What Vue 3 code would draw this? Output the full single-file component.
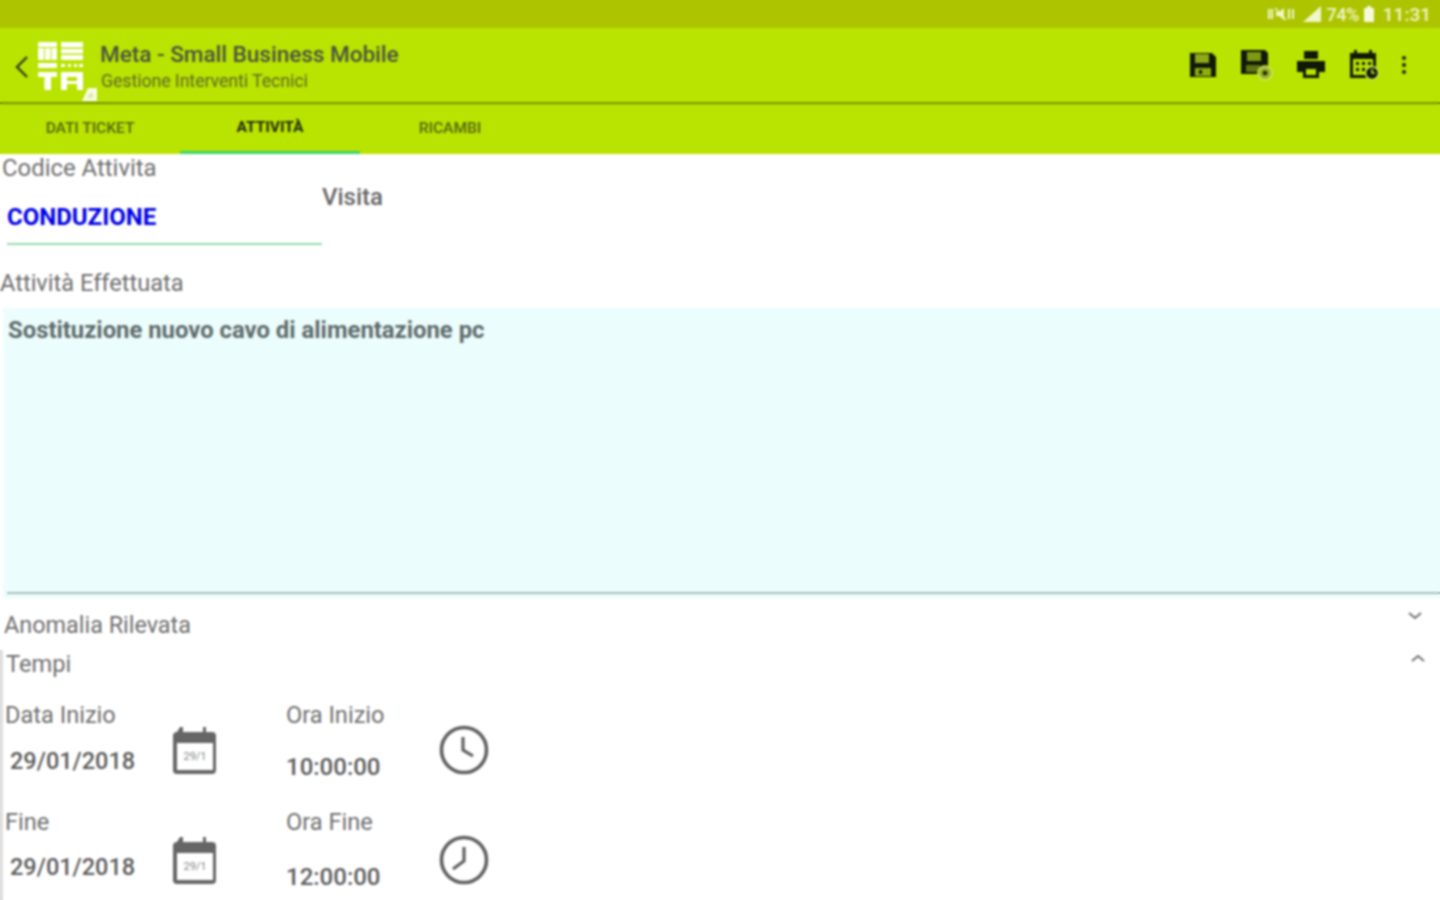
<script setup>
const tabs = [
  { label: 'DATI TICKET', active: false },
  { label: 'ATTIVITÀ', active: true },
  { label: 'RICAMBI', active: false }
]
const timeRows = [
  { dateLabel: 'Data Inizio', date: '29/01/2018', timeLabel: 'Ora Inizio', time: '10:00:00', hand: 'M24 12V25L34 31' },
  { dateLabel: 'Fine', date: '29/01/2018', timeLabel: 'Ora Fine', time: '12:00:00', hand: 'M25 12V26L14 34' }
]
</script>

<template>
  <div class="screen">
    <div class="status">
      <svg class="st-mute" width="28" height="16" viewBox="0 0 28 16">
        <path d="M1 3v10M4 3v10" stroke="#f1f6c8" stroke-width="2" />
        <path d="M8 6h3l5-4v12l-5-4H8z" fill="#f1f6c8" />
        <path d="M7 2l11 12" stroke="#f1f6c8" stroke-width="1.500" />
        <path d="M21 3v10M25 3v10" stroke="#f1f6c8" stroke-width="2" />
      </svg>
      <svg class="st-signal" width="20" height="16" viewBox="0 0 20 16"><path d="M1 16L19 0V16Z" fill="#f1f6c8" /></svg>
      <span class="st-pct">74%</span>
      <svg class="st-bat" width="12" height="16" viewBox="0 0 12 16"><path d="M4 0h4v2h3v14H1V2h3z" fill="#f6f9dc" /></svg>
      <span class="st-time">11:31</span>
    </div>

    <header class="toolbar">
      <svg class="back" width="16" height="26" viewBox="0 0 16 26"><path d="M13 3L3 13l10 10" fill="none" stroke="#333d22" stroke-width="2.400" /></svg>
      <svg class="logo" width="60" height="62" viewBox="0 0 60 62" aria-label="Meta">
        <g fill="#fff">
          <path d="M1 2h19v5H1zM1 8h6v12H1zM8 8h5.500v12H8zM14.500 8H20v12h-5.500z" />
          <path d="M24 2h22v5.500H24zM24 9h22v4.500H24zM24 15h22v5H24z" />
          <path d="M1 23h19v5H1zM24 24h4v3h-4zM31 24h3v3h-3zM37 24h3v3h-3zM42 24h4v3h-4z" />
          <path d="M1 32h19v5H1zM7.500 37H14v13H7.500zM24 32h22v5H24zM24 37h6v13h-6zM40 37h6v13h-6zM30 41h10v3H30z" />
        </g>
        <path d="M45 61l6-13h9v13z" fill="#f8fbe8" />
        <path d="M50 58l3-5h3v5z" fill="#dcebac" />
      </svg>
      <div class="titles">
        <div class="title">Meta - Small Business Mobile</div>
        <div class="subtitle">Gestione Interventi Tecnici</div>
      </div>
      <div class="actions">
        <svg width="28" height="28" viewBox="0 0 28 28">
          <path d="M1 2h22l4 4v20H1z" fill="#111a08" />
          <rect x="6" y="3" width="14" height="9" fill="#8ea81a" />
          <rect x="6" y="17" width="16" height="8" fill="#8fae0c" />
          <rect x="10" y="19" width="3" height="4" fill="#111a08" />
        </svg>
        <svg width="34" height="32" viewBox="0 0 34 32">
          <path d="M1 1h24l3 3v21H1z" fill="#111a08" />
          <rect x="7" y="3" width="14" height="9" fill="#7f9a12" />
          <rect x="6" y="16" width="14" height="7" fill="#5f7410" />
          <circle cx="25" cy="24" r="7" fill="#9cb82a" stroke="#d2ea60" stroke-width="1.500" />
          <circle cx="25" cy="24" r="2.500" fill="#26300c" />
        </svg>
        <svg width="28" height="30" viewBox="0 0 28 30">
          <rect x="7" y="1" width="14" height="8" fill="#111a08" />
          <path d="M0 11h28v11h-6v-4H6v4H0z" fill="#111a08" />
          <path d="M6 16h16v12H6z" fill="#111a08" />
          <rect x="9" y="19" width="10" height="6" fill="#b9e300" />
        </svg>
        <svg width="32" height="32" viewBox="0 0 32 32">
          <path d="M2 4h4V1h3v3h12V1h3v3h4v25H2z" fill="#111a08" />
          <rect x="5" y="10" width="20" height="16" fill="#b9e300" />
          <path d="M8 13h3v3H8zM14 13h3v3h-3zM20 13h3v3h-3zM8 19h3v3H8zM14 19h3v3h-3z" fill="#111a08" />
          <circle cx="24" cy="24" r="6.500" fill="#111a08" stroke="#c9e850" stroke-width="1.500" />
          <path d="M24 20v4h3" stroke="#c9e850" stroke-width="1.500" fill="none" />
        </svg>
        <span class="dots"><i></i><i></i><i></i></span>
      </div>
    </header>

    <nav class="tabs">
      <div v-for="t in tabs" :key="t.label" class="tab" :class="{ active: t.active }">{{ t.label }}</div>
    </nav>

    <main class="content">
      <div class="code-row">
        <div class="code-col">
          <div class="label code-label">Codice Attivita</div>
          <div class="code-val">CONDUZIONE</div>
        </div>
        <div class="visita">Visita</div>
      </div>

      <div class="label effect-label">Attività Effettuata</div>
      <div class="effect-box">
        <div class="effect-text">Sostituzione nuovo cavo di alimentazione pc</div>
      </div>

      <div class="acc-row anomaly">
        <span class="label anomaly-label">Anomalia Rilevata</span>
        <svg width="16" height="10" viewBox="0 0 16 10"><path d="M2 2l6 5 6-5" fill="none" stroke="#707070" stroke-width="2" /></svg>
      </div>

      <section class="tempi">
        <div class="acc-row tempi-head">
          <span class="label">Tempi</span>
          <svg width="16" height="10" viewBox="0 0 16 10"><path d="M2 8l6-5 6 5" fill="none" stroke="#707070" stroke-width="2" /></svg>
        </div>
        <div v-for="r in timeRows" :key="r.timeLabel" class="time-row">
          <div class="date-col">
            <div class="label">{{ r.dateLabel }}</div>
            <div class="date-val">{{ r.date }}</div>
          </div>
          <svg class="cal" width="46" height="50" viewBox="0 0 46 50">
            <path d="M8 1h3v5h20V1h3v5h6a4 4 0 0 1 4 4v34a4 4 0 0 1-4 4H5a4 4 0 0 1-4-4V10a4 4 0 0 1 4-4z" fill="#666" />
            <rect x="5" y="17" width="36" height="27" fill="#fff" />
            <text x="23" y="34" text-anchor="middle" class="cal-text">29/1</text>
          </svg>
          <div class="hour-col">
            <div class="label">{{ r.timeLabel }}</div>
            <div class="hour-val">{{ r.time }}</div>
          </div>
          <svg class="clock" width="50" height="50" viewBox="0 0 50 50">
            <circle cx="25" cy="25" r="22.500" fill="none" stroke="#606060" stroke-width="3.600" />
            <path :d="r.hand" fill="none" stroke="#606060" stroke-width="3.200" />
          </svg>
        </div>
      </section>
    </main>
    <div class="soften"></div>
  </div>
</template>

<style scoped>
.screen {
  width: 1440px;
  height: 900px;
  overflow: hidden;
  background: #fff;
  position: relative;
  font-family: Roboto, "Liberation Sans", sans-serif;
}
.soften {
  position: absolute;
  inset: 0;
  pointer-events: none;
  backdrop-filter: blur(0.9px);
}
.status {
  height: 28px;
  background: #adc400;
  display: flex;
  align-items: center;
  justify-content: flex-end;
  padding-right: 9px;
  color: #f1f6c8;
}
.st-mute { margin-right: 6px; }
.st-signal { margin-right: 5px; }
.st-pct { font-size: 18px; font-weight: 500; letter-spacing: -0.5px; margin-right: 4px; }
.st-bat { margin-right: 8px; }
.st-time { font-size: 19px; font-weight: 500; }
.toolbar {
  height: 74px;
  background: #b9e300;
  display: flex;
  align-items: center;
  box-shadow: 0 2px 1px rgba(70, 90, 0, 0.55);
  position: relative;
}
.back { margin-left: 14px; margin-top: 4px; }
.logo { margin-left: 7px; margin-top: 12px; }
.titles { margin-left: 4px; margin-top: 2px; }
.title { font-size: 22.500px; font-weight: 500; color: #4a5442; line-height: 28px; margin-left: -1px; }
.subtitle { font-size: 17.600px; color: #5f6e27; line-height: 22px; margin-top: 2px; }
.actions {
  margin-left: auto;
  display: flex;
  align-items: center;
  padding-right: 34px;
  gap: 23px;
}
.dots { display: flex; flex-direction: column; gap: 3px; margin-left: -1px; }
.dots i { width: 4px; height: 4px; background: #1a2208; border-radius: 50%; }
.tabs {
  height: 52px;
  background: #b9e300;
  display: flex;
}
.tab {
  width: 180px;
  height: 52px;
  box-sizing: border-box;
  display: flex;
  align-items: center;
  justify-content: center;
  font-size: 15.500px;
  font-weight: 500;
  color: #566a10;
}
.tab.active {
  color: #252d08;
  font-weight: 700;
  border-bottom: 3px solid #3fd36a;
}
.label { font-size: 23.600px; color: #6f6f6f; line-height: 28px; }
.code-label { font-size: 23.900px; margin-top: 0; }
.anomaly-label { font-size: 23.400px; }
.code-row { display: flex; }
.code-col { width: 322px; height: 90px; box-sizing: border-box; padding-left: 2px; }
.code-val {
  margin: 20px 0 0 5px;
  height: 41px;
  border-bottom: 2px solid #8fdcae;
  font-size: 24px;
  font-weight: 700;
  color: #0000e6;
  line-height: 30px;
}
.visita { font-size: 24px; font-weight: 500; color: #666; margin-top: 29px; line-height: 28px; }
.effect-label { margin-top: 25px; }
.effect-box {
  margin: 11px 0 0 3px;
  height: 290px;
  background: #ecfdfd;
  box-sizing: border-box;
  padding: 8px 0 0 5px;
  position: relative;
}
.effect-box::after {
  content: "";
  position: absolute;
  left: 4px;
  right: 0;
  bottom: 4px;
  height: 2px;
  background: #a6bcb8;
}
.effect-text { font-size: 23.850px; font-weight: 700; color: #5f6b6b; line-height: 28px; }
.acc-row { display: flex; justify-content: space-between; align-items: flex-start; }
.anomaly { padding: 13px 17px 0 4px; height: 52px; box-sizing: border-box; }
.tempi { border-left: 3px solid #dedede; height: 250px; }
.tempi-head { padding: 0 14px 0 3px; height: 38px; }
.tempi-head svg { margin-top: 3px; }
.time-row {
  display: flex;
  height: 107px;
  padding-left: 2px;
  align-items: flex-start;
}
.date-col { width: 168px; padding-top: 13px; }
.date-val { font-size: 23.500px; font-weight: 500; color: #5c5c5c; margin: 17px 0 0 5px; line-height: 30px; }
.cal { margin-top: 38px; margin-left: -1px; }
.hour-col { margin-left: 68px; width: 154px; padding-top: 13px; }
.hour-val { font-size: 24px; font-weight: 500; color: #5c5c5c; margin-top: 23px; line-height: 30px; }
.clock { margin-top: 37px; margin-left: -1px; }
.time-row + .time-row .date-val { margin-top: 16px; }
.time-row + .time-row .hour-val { margin-top: 26px; }
.time-row + .time-row .cal { margin-top: 41px; }
.time-row + .time-row .clock { margin-top: 40px; }
.cal-text { font-size: 11px; fill: #888; font-family: Roboto, sans-serif; }
</style>

<style>
body { margin: 0; background: #fff; }
</style>
